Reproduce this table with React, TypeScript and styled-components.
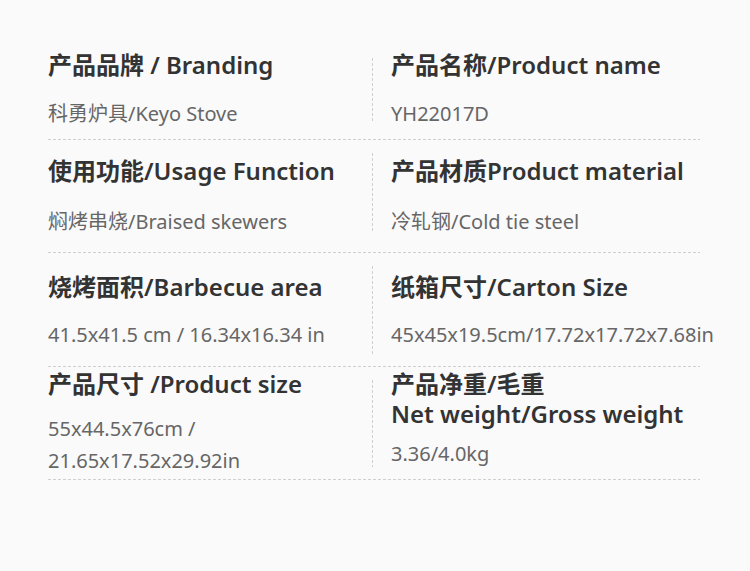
import React from "react";
import styled, { createGlobalStyle } from "styled-components";

const Global = createGlobalStyle`
  html, body { margin: 0; padding: 0; background: #fafafa; }
  body { font-family: "Noto Sans", "Noto Sans CJK SC", sans-serif; }
`;

const Page = styled.div`
  width: 750px;
  height: 571px;
  background: #fafafa;
  padding: 44px 50px 0 48px;
  box-sizing: border-box;
  overflow: hidden;
`;

const Row = styled.div<{ $pt: number; $pb: number }>`
  display: grid;
  grid-template-columns: 324px 1px 1fr;
  padding-top: ${(p) => p.$pt}px;
  padding-bottom: ${(p) => p.$pb}px;
  background-image: linear-gradient(to right, #cfcfcf 60%, transparent 60%);
  background-size: 5px 1px;
  background-repeat: repeat-x;
  background-position: left bottom;
`;

const VLine = styled.div<{ $mt: number; $mb: number }>`
  width: 1px;
  margin-top: ${(p) => p.$mt}px;
  margin-bottom: ${(p) => p.$mb}px;
  background-image: linear-gradient(to bottom, #cfcfcf 60%, transparent 60%);
  background-size: 1px 5px;
  background-repeat: repeat-y;
`;

const Cell = styled.div<{ $right?: boolean }>`
  display: flex;
  flex-direction: column;
  padding-left: ${(p) => (p.$right ? 18 : 0)}px;
  min-width: 0;
`;

const Heading = styled.div`
  font-size: 24px;
  line-height: 30px;
  font-weight: 600;
  color: #333;
  white-space: nowrap;
`;

const Sub = styled.div<{ $mt: number }>`
  margin-top: ${(p) => p.$mt}px;
  font-size: 20px;
  line-height: 32px;
  color: #666;
  white-space: nowrap;
`;

type Item = { h: React.ReactNode; s: React.ReactNode; gap: number };
type RowDef = {
  pt: number;
  pb: number;
  lt: number;
  lb: number;
  left: Item;
  right: Item;
};

const rows: RowDef[] = [
  {
    pt: 6,
    pb: 10,
    lt: 14,
    lb: 17,
    left: { h: "产品品牌 / Branding", s: "科勇炉具/Keyo Stove", gap: 18 },
    right: { h: "产品名称/Product name", s: "YH22017D", gap: 18 },
  },
  {
    pt: 16,
    pb: 15,
    lt: 13,
    lb: 20,
    left: { h: "使用功能/Usage Function", s: "焖烤串烧/Braised skewers", gap: 20 },
    right: { h: "产品材质Product material", s: "冷轧钢/Cold tie steel", gap: 20 },
  },
  {
    pt: 19,
    pb: 16,
    lt: 13,
    lb: 12,
    left: { h: "烧烤面积/Barbecue area", s: "41.5x41.5 cm / 16.34x16.34 in", gap: 17 },
    right: { h: "纸箱尺寸/Carton Size", s: "45x45x19.5cm/17.72x17.72x7.68in", gap: 17 },
  },
  {
    pt: 2,
    pb: 3,
    lt: 13,
    lb: 13,
    left: {
      h: "产品尺寸 /Product size",
      s: (
        <>
          55x44.5x76cm /
          <br />
          21.65x17.52x29.92in
        </>
      ),
      gap: 14,
    },
    right: {
      h: (
        <>
          产品净重/毛重
          <br />
          Net weight/Gross weight
        </>
      ),
      s: "3.36/4.0kg",
      gap: 9,
    },
  },
];

export default function App() {
  return (
    <>
      <Global />
      <Page>
        {rows.map((r, i) => (
          <Row key={i} $pt={r.pt} $pb={r.pb}>
            <Cell>
              <Heading>{r.left.h}</Heading>
              <Sub $mt={r.left.gap}>{r.left.s}</Sub>
            </Cell>
            <VLine $mt={r.lt - r.pt} $mb={r.lb - r.pb} />
            <Cell $right>
              <Heading>{r.right.h}</Heading>
              <Sub $mt={r.right.gap}>{r.right.s}</Sub>
            </Cell>
          </Row>
        ))}
      </Page>
    </>
  );
}
